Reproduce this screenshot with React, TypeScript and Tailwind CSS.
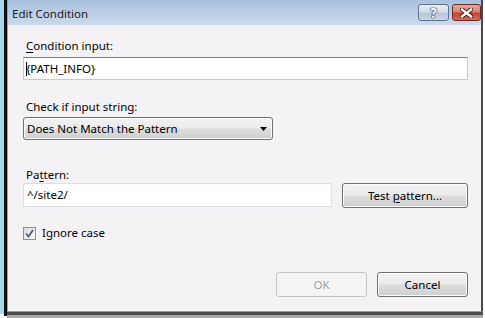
import React from 'react';

const font = { fontFamily: '"Noto Sans", "Open Sans", sans-serif' };

const Btn = ({ children, disabled }: { children: React.ReactNode; disabled?: boolean }) => (
  <div
    className={
      disabled
        ? 'flex h-[25px] items-center justify-center rounded-[3px] border border-[#c4c6c8] bg-[#f4f4f4] text-[#a2a2a2]'
        : 'flex h-[25px] items-center justify-center rounded-[3px] border border-[#707070] bg-[linear-gradient(#f2f2f2_0%,#ebebeb_48%,#dddddd_52%,#cfcfcf_100%)] text-black shadow-[inset_0_0_0_1px_#fcfcfc]'
    }
  >
    <span>{children}</span>
  </div>
);

const EditCondition = () => {
  return (
    <div className="flex h-[318px] w-[485px] overflow-hidden bg-white text-[11.5px] leading-[16px] text-black" style={font}>
      {/* desktop edge behind the dialog */}
      <div className="h-[314px] w-[4px] bg-[#a9d9f1]" />
      <div className="h-[316px] w-[3px] bg-[#111111]" />

      <div className="flex w-[476px] flex-col">
        <div className="flex h-[312px] flex-col border-b border-l border-r-2 border-b-[#38c0ee] border-l-[#38c0ee] border-r-[#4a4a4a] bg-[#f5f2f5]">
          {/* title bar */}
          <div className="flex h-[25px] items-start bg-[linear-gradient(#a8c1de,#cbdaec)] pl-[4px]">
            <span className="mt-[6px] text-[11.5px] text-[#1a1a1a]">Edit Condition</span>
            <div className="ml-auto mt-[4px] flex gap-[3px]">
              <div className="flex h-[17px] w-[31px] items-center justify-center rounded-[3px] border border-[#5d7390] bg-[linear-gradient(#e8eef5_0%,#d3dde9_45%,#b8c8da_55%,#c8d6e6_100%)] text-[14px] font-bold leading-none text-white [text-shadow:0_0_1px_#2b3d55,0_0_1px_#2b3d55,0_0_1px_#2b3d55,0_0_1px_#2b3d55]">
                ?
              </div>
              <div className="flex h-[17px] w-[29px] items-center justify-center rounded-[3px] border border-[#6b2b22] bg-[linear-gradient(#eaa597_0%,#d9826f_45%,#c3432f_55%,#d86e55_100%)]">
                <svg width="13" height="10" viewBox="0 0 13 10">
                  <path d="M2 1.5 L11 8.5 M11 1.5 L2 8.5" stroke="#3a1410" strokeWidth="4.2" strokeLinecap="square" />
                  <path d="M2 1.5 L11 8.5 M11 1.5 L2 8.5" stroke="#ffffff" strokeWidth="2.4" strokeLinecap="square" />
                </svg>
              </div>
            </div>
          </div>

          {/* body */}
          <div className="flex flex-1 flex-col pl-[15px] pr-[13px]">
            <div className="mt-[13px] pl-[3px]">
              <span className="underline underline-offset-2">C</span>ondition input:
            </div>
            <div className="mt-[3px] flex h-[23px] items-center border border-[#b5cfe8] border-t-[#5e84ae] bg-white pl-[2px]">
              <span className="-mr-px inline-block h-[14px] w-px bg-black" />
              <span>{'{PATH_INFO}'}</span>
            </div>

            <div className="mt-[19px] pl-[3px]">Check if input string:</div>
            <div className="mt-[2px] flex h-[23px] w-[250px] items-center rounded-[3px] border border-[#707070] bg-[linear-gradient(#f2f2f2_0%,#ebebeb_48%,#dddddd_52%,#cfcfcf_100%)] pl-[3px] pr-[5px] shadow-[inset_0_0_0_1px_#fcfcfc]">
              <span>Does Not Match the Pattern</span>
              <svg className="ml-auto" width="7" height="4" viewBox="0 0 7 4">
                <path d="M0 0 H7 L3.5 4 Z" fill="#000" />
              </svg>
            </div>

            <div className="mt-[27px] pl-[3px]">
              Pa<span className="underline underline-offset-2">t</span>tern:
            </div>
            <div className="flex items-start gap-[10px]">
              <div className="flex h-[24px] w-[309px] items-center border border-[#dadde4] bg-white pl-[3px]">^/site2/</div>
              <div className="w-[126px]">
                <Btn>
                  Test <span className="underline underline-offset-2">p</span>attern...
                </Btn>
              </div>
            </div>

            <div className="mt-[17px] flex items-center gap-[6px]">
              <div className="flex h-[13px] w-[13px] items-center justify-center border border-[#8e8f8f] bg-[linear-gradient(135deg,#dcdcdc,#fbfbfb)]">
                <svg width="9" height="9" viewBox="0 0 9 9">
                  <path d="M1 4.5 L3.5 7.5 L8 1" fill="none" stroke="#4a6184" strokeWidth="1.8" />
                </svg>
              </div>
              <span>Ignore case</span>
            </div>

            <div className="mb-[14px] mt-auto flex justify-end gap-[10px]">
              <div className="w-[91px]">
                <Btn disabled>OK</Btn>
              </div>
              <div className="w-[91px]">
                <Btn>Cancel</Btn>
              </div>
            </div>
          </div>
        </div>
        {/* drop shadow */}
        <div className="h-[3px] bg-[#4d4d4d]" />
        <div className="h-[3px] bg-[#a8a8a8]" />
      </div>
    </div>
  );
};

export default EditCondition;
